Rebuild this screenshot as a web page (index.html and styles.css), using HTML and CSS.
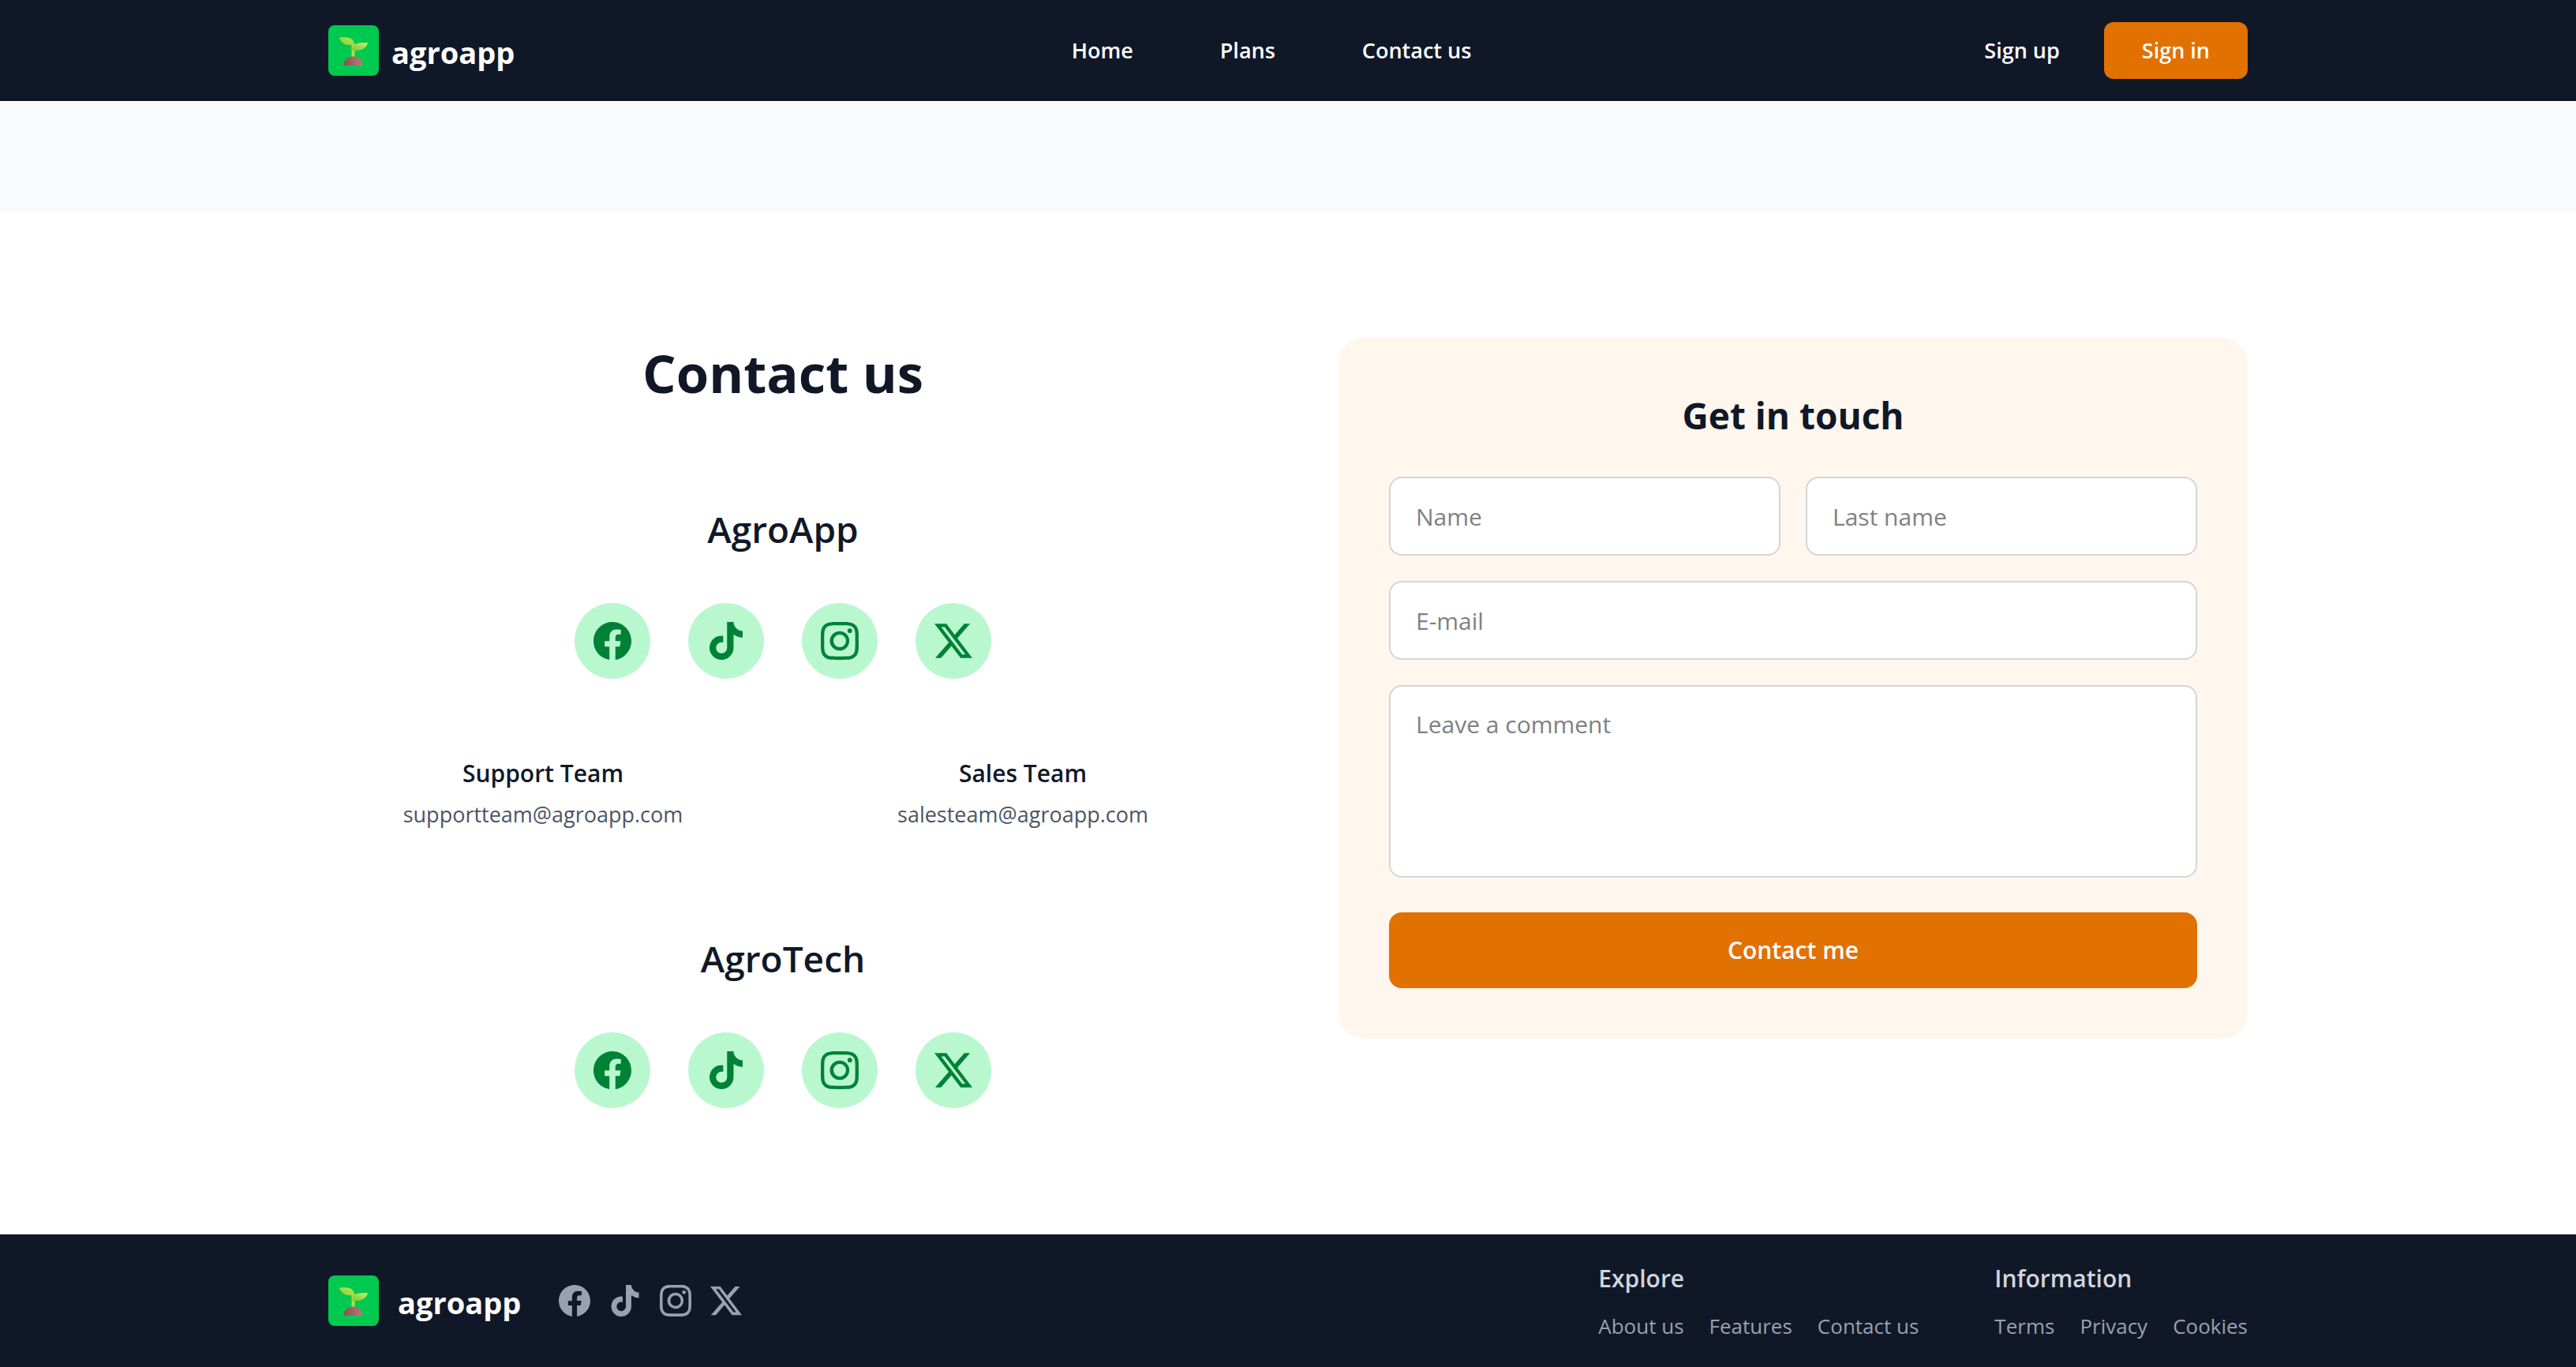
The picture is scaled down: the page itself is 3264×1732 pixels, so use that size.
FILE: index.html
```html
<!DOCTYPE html>
<html lang="en">
<head>
  <meta charset="utf-8">
  <meta name="viewport" content="width=device-width, initial-scale=1">
  <title>Contact us - agroapp</title>
  <link rel="stylesheet" href="styles.css">
</head>
<body>
  <svg class="sprite" aria-hidden="true">
    <defs>
      <linearGradient id="leaf-left" x1="0" y1="1" x2="1" y2="0">
        <stop offset="0" stop-color="#8fc92f"/>
        <stop offset="1" stop-color="#b4ea5c"/>
      </linearGradient>
      <linearGradient id="leaf-right" x1="0" y1="1" x2="1" y2="0">
        <stop offset="0" stop-color="#86c232"/>
        <stop offset="1" stop-color="#c0f56a"/>
      </linearGradient>
      <linearGradient id="soil" x1="0" y1="0" x2="1" y2="0">
        <stop offset="0" stop-color="#86534f"/>
        <stop offset="1" stop-color="#b87c79"/>
      </linearGradient>
    </defs>
    <symbol id="sprout" viewBox="0 0 64 64">
      <path fill="#a9dc4e" d="M29.500 23h4v17h-4z"/>
      <path fill="url(#leaf-left)" d="M14 15.500C22 15 28 15 31 19c1.500 2 2 4 2 6-7 .5-12 0-15-3-2-2-3.500-4-4-6.500z"/>
      <path fill="url(#leaf-right)" d="M50 22.200C42 21.700 36 22 32.500 25c-1.500 1.500-2 4-2 7 7 .3 12-.500 15-3 2.500-2 4-4 4.500-6.800z"/>
      <path fill="url(#soil)" d="M19.500 51c0-7 5-11.500 12-11.500S43.500 44 43.500 51z"/>
    </symbol>
    <symbol id="facebook" viewBox="0 0 16 16">
      <path d="M16 8.049c0-4.446-3.582-8.05-8-8.05C3.58 0-.002 3.603-.002 8.05c0 4.017 2.926 7.347 6.75 7.951v-5.625h-2.03V8.05H6.75V6.275c0-2.017 1.195-3.131 3.022-3.131.876 0 1.791.157 1.791.157v1.98h-1.009c-.993 0-1.303.621-1.303 1.258v1.51h2.218l-.354 2.326H9.25V16c3.824-.604 6.75-3.934 6.75-7.951"/>
    </symbol>
    <symbol id="tiktok" viewBox="-32 0 512 512">
      <path d="M448 209.910a210.060 210.060 0 0 1-122.770-39.250v178.720A162.550 162.550 0 1 1 185 188.310v89.890a74.620 74.620 0 1 0 52.230 71.180V0h88a121.180 121.180 0 0 0 1.860 22.170A122.180 122.180 0 0 0 381 102.390a121.430 121.430 0 0 0 67 20.140z"/>
    </symbol>
    <symbol id="instagram" viewBox="0 0 16 16">
      <path d="M8 0C5.829 0 5.556.01 4.703.048 3.85.088 3.269.222 2.76.42a3.9 3.9 0 0 0-1.417.923A3.9 3.9 0 0 0 .42 2.76C.222 3.268.087 3.85.048 4.7.01 5.555 0 5.827 0 8.001c0 2.172.01 2.444.048 3.297.04.852.174 1.433.372 1.942.205.526.478.972.923 1.417.444.445.89.719 1.416.923.51.198 1.09.333 1.942.372C5.555 15.99 5.827 16 8 16s2.444-.01 3.298-.048c.851-.04 1.434-.174 1.943-.372a3.9 3.9 0 0 0 1.416-.923c.445-.445.718-.891.923-1.417.197-.509.332-1.09.372-1.942C15.99 10.445 16 10.173 16 8s-.01-2.445-.048-3.299c-.04-.851-.175-1.433-.372-1.941a3.9 3.9 0 0 0-.923-1.417A3.9 3.9 0 0 0 13.24.42c-.51-.198-1.092-.333-1.943-.372C10.443.01 10.172 0 7.998 0zm-.717 1.442h.718c2.136 0 2.389.007 3.232.046.78.035 1.204.166 1.486.275.373.145.64.319.92.599s.453.546.598.92c.11.281.24.705.275 1.485.039.843.047 1.096.047 3.231s-.008 2.389-.047 3.232c-.035.78-.166 1.203-.275 1.485a2.5 2.5 0 0 1-.599.919c-.28.28-.546.453-.92.598-.28.11-.704.24-1.485.276-.843.038-1.096.047-3.232.047s-2.39-.009-3.233-.047c-.78-.036-1.203-.166-1.485-.276a2.5 2.5 0 0 1-.92-.598 2.5 2.5 0 0 1-.6-.92c-.109-.281-.24-.705-.275-1.485-.038-.843-.046-1.096-.046-3.233s.008-2.388.046-3.231c.036-.78.166-1.204.276-1.486.145-.373.319-.64.599-.92s.546-.453.92-.598c.282-.11.705-.24 1.485-.276.738-.034 1.024-.044 2.515-.045zm4.988 1.328a.96.96 0 1 0 0 1.920.96.96 0 0 0 0-1.920m-4.270 1.122a4.109 4.109 0 1 0 0 8.217 4.109 4.109 0 0 0 0-8.217m0 1.441a2.667 2.667 0 1 1 0 5.334 2.667 2.667 0 0 1 0-5.334"/>
    </symbol>
    <symbol id="twitter-x" viewBox="0 0 16 16">
      <path d="M12.6.75h2.454l-5.36 6.142L16 15.25h-4.937l-3.867-5.07-4.425 5.07H.316l5.733-6.57L0 .75h5.063l3.495 4.633L12.601.75Zm-.86 13.028h1.36L4.323 2.145H2.865z"/>
    </symbol>
  </svg>

  <header class="site-header">
    <div class="container header-row">
      <div class="header-side">
        <a class="brand" href="#">
          <svg class="brand-mark" aria-hidden="true"><use href="#sprout"/></svg>
          <span class="brand-name">agroapp</span>
        </a>
      </div>
      <nav class="main-nav" aria-label="Main">
        <a href="#">Home</a>
        <a href="#">Plans</a>
        <a href="#">Contact us</a>
      </nav>
      <div class="header-side header-actions">
        <a href="#">Sign up</a>
        <button class="button sign-in" type="button">Sign in</button>
      </div>
    </div>
  </header>

  <div class="band"></div>

  <main class="container contact">
    <section class="contact-info">
      <h1 class="page-title">Contact us</h1>

      <div class="company">
        <h2 class="company-name">AgroApp</h2>
        <div class="social-badges">
          <a href="#" aria-label="Facebook"><svg><use href="#facebook"/></svg></a>
          <a href="#" aria-label="TikTok"><svg><use href="#tiktok"/></svg></a>
          <a href="#" aria-label="Instagram"><svg><use href="#instagram"/></svg></a>
          <a href="#" aria-label="X"><svg><use href="#twitter-x"/></svg></a>
        </div>
        <div class="teams">
          <div class="team">
            <h3 class="team-name">Support Team</h3>
            <p class="team-email">supportteam@agroapp.com</p>
          </div>
          <div class="team">
            <h3 class="team-name">Sales Team</h3>
            <p class="team-email">salesteam@agroapp.com</p>
          </div>
        </div>
      </div>

      <div class="company">
        <h2 class="company-name">AgroTech</h2>
        <div class="social-badges">
          <a href="#" aria-label="Facebook"><svg><use href="#facebook"/></svg></a>
          <a href="#" aria-label="TikTok"><svg><use href="#tiktok"/></svg></a>
          <a href="#" aria-label="Instagram"><svg><use href="#instagram"/></svg></a>
          <a href="#" aria-label="X"><svg><use href="#twitter-x"/></svg></a>
        </div>
      </div>
    </section>

    <form class="contact-form">
      <h2 class="form-title">Get in touch</h2>
      <div class="fields">
        <input class="field" type="text" placeholder="Name" aria-label="Name">
        <input class="field" type="text" placeholder="Last name" aria-label="Last name">
        <input class="field field-wide" type="email" placeholder="E-mail" aria-label="E-mail">
        <textarea class="field field-wide" rows="4" placeholder="Leave a comment" aria-label="Leave a comment"></textarea>
      </div>
      <button class="button submit" type="submit">Contact me</button>
    </form>
  </main>

  <footer class="site-footer">
    <div class="container footer-row">
      <div class="footer-brand">
        <a class="brand" href="#">
          <svg class="brand-mark" aria-hidden="true"><use href="#sprout"/></svg>
          <span class="brand-name">agroapp</span>
        </a>
        <div class="footer-social">
          <a href="#" aria-label="Facebook"><svg><use href="#facebook"/></svg></a>
          <a href="#" aria-label="TikTok"><svg><use href="#tiktok"/></svg></a>
          <a href="#" aria-label="Instagram"><svg><use href="#instagram"/></svg></a>
          <a href="#" aria-label="X"><svg><use href="#twitter-x"/></svg></a>
        </div>
      </div>
      <div class="footer-groups">
        <nav class="footer-group" aria-label="Explore">
          <h3 class="footer-heading">Explore</h3>
          <div class="footer-links">
            <a href="#">About us</a>
            <a href="#">Features</a>
            <a href="#">Contact us</a>
          </div>
        </nav>
        <nav class="footer-group" aria-label="Information">
          <h3 class="footer-heading">Information</h3>
          <div class="footer-links">
            <a href="#">Terms</a>
            <a href="#">Privacy</a>
            <a href="#">Cookies</a>
          </div>
        </nav>
      </div>
    </div>
  </footer>
</body>
</html>
```
FILE: styles.css
```css
:root {
  --ink: #101828;
  --orange: #e17100;
  --text-xs: 26px;
  --text-sm: 27px;
  --text-md: 30px;
  --text-logo: 38px;
  --text-xl: 46px;
  --text-title: 67px;
}

* {
  box-sizing: border-box;
}

body {
  margin: 0;
  background: #fff;
  color: var(--ink);
  font-family: "Segoe UI", "Open Sans", "Noto Sans", sans-serif;
  font-size: var(--text-sm);
  line-height: 40px;
}

h1,
h2,
h3,
p {
  margin: 0;
}

a {
  color: inherit;
  text-decoration: none;
}

svg {
  display: block;
  fill: currentColor;
}

.sprite {
  position: absolute;
  width: 0;
  height: 0;
}

.container {
  width: 100%;
  max-width: 2560px;
  margin: 0 auto;
  padding: 0 64px;
}

.button {
  border: 0;
  background: var(--orange);
  color: #fff;
  font-family: inherit;
  font-weight: 600;
  cursor: pointer;
}

/* Brand */

.brand {
  display: inline-flex;
  align-items: center;
  gap: 16px;
}

.brand-mark {
  width: 64px;
  height: 64px;
  border-radius: 8px;
  background: #00c950;
}

.brand-name {
  padding-top: 4px;
  color: #fff;
  font-size: var(--text-logo);
  font-weight: 700;
}

/* Header */

.site-header {
  background: var(--ink);
  color: #fff;
  font-weight: 600;
}

.header-row {
  display: flex;
  align-items: center;
  min-height: 128px;
}

.header-side {
  display: flex;
  flex: 1;
  align-items: center;
}

.main-nav {
  display: flex;
  gap: 110px;
  padding-right: 42px;
}

.header-actions {
  justify-content: flex-end;
  gap: 56px;
}

.sign-in {
  padding: 16px 48px;
  border-radius: 12px;
  font-size: var(--text-sm);
  line-height: 40px;
}

.band {
  height: 140px;
  background: #f9fafb;
}

/* Contact section */

.contact {
  display: grid;
  grid-template-columns: 1fr 1fr;
  align-items: start;
  gap: 128px;
  padding-top: 160px;
  padding-bottom: 160px;
}

.contact-info {
  display: flex;
  flex-direction: column;
  gap: 128px;
  text-align: center;
}

.page-title {
  padding-top: 8px;
  font-size: var(--text-title);
  font-weight: 700;
  line-height: 72px;
}

.company-name {
  padding-top: 4px;
  font-size: var(--text-xl);
  font-weight: 600;
  line-height: 60px;
}

.social-badges {
  display: flex;
  justify-content: center;
  gap: 48px;
  margin-top: 64px;
}

.social-badges a {
  display: grid;
  place-items: center;
  width: 96px;
  height: 96px;
  border-radius: 50%;
  background: #b9f8cf;
  color: #008236;
}

.social-badges svg {
  width: 48px;
  height: 48px;
}

.teams {
  display: grid;
  grid-template-columns: 1fr 1fr;
  gap: 64px;
  margin-top: 96px;
}

.team {
  display: grid;
  gap: 8px;
}

.team-name {
  font-size: var(--text-md);
  font-weight: 600;
  line-height: 48px;
}

.team-email {
  color: #4a5565;
}

/* Form */

.contact-form {
  padding: 64px;
  border-radius: 32px;
  background: #fff7ed;
}

.form-title {
  margin-bottom: 48px;
  padding-top: 4px;
  font-size: var(--text-xl);
  font-weight: 700;
  line-height: 60px;
  text-align: center;
}

.fields {
  display: grid;
  grid-template-columns: 1fr 1fr;
  gap: 32px;
}

.field {
  display: block;
  width: 100%;
  min-width: 0;
  margin: 0;
  padding: 24px 32px;
  border: 2px solid #d1d5dc;
  border-radius: 16px;
  background: #fff;
  color: var(--ink);
  font-family: inherit;
  font-size: var(--text-md);
  line-height: 48px;
  resize: none;
}

input.field {
  height: 100px;
}

.field::placeholder {
  color: #808080;
}

.field-wide {
  grid-column: 1 / -1;
}

.submit {
  width: 100%;
  margin-top: 44px;
  padding: 24px;
  border-radius: 16px;
  font-size: var(--text-md);
  line-height: 48px;
}

/* Footer */

.site-footer {
  padding: 32px 0;
  background: var(--ink);
  color: #99a1af;
}

.footer-row {
  display: flex;
  align-items: center;
  justify-content: space-between;
}

.footer-brand {
  display: flex;
  align-items: center;
  gap: 48px;
}

.footer-brand .brand {
  gap: 24px;
}

.footer-social {
  display: flex;
  gap: 24px;
}

.footer-social svg {
  width: 40px;
  height: 40px;
}

.footer-groups {
  display: flex;
  gap: 96px;
}

.footer-group {
  display: grid;
  gap: 16px;
}

.footer-heading {
  color: #d1d5dc;
  font-size: var(--text-md);
  font-weight: 600;
  line-height: 48px;
}

.footer-links {
  display: flex;
  gap: 32px;
  font-size: var(--text-xs);
}
```
